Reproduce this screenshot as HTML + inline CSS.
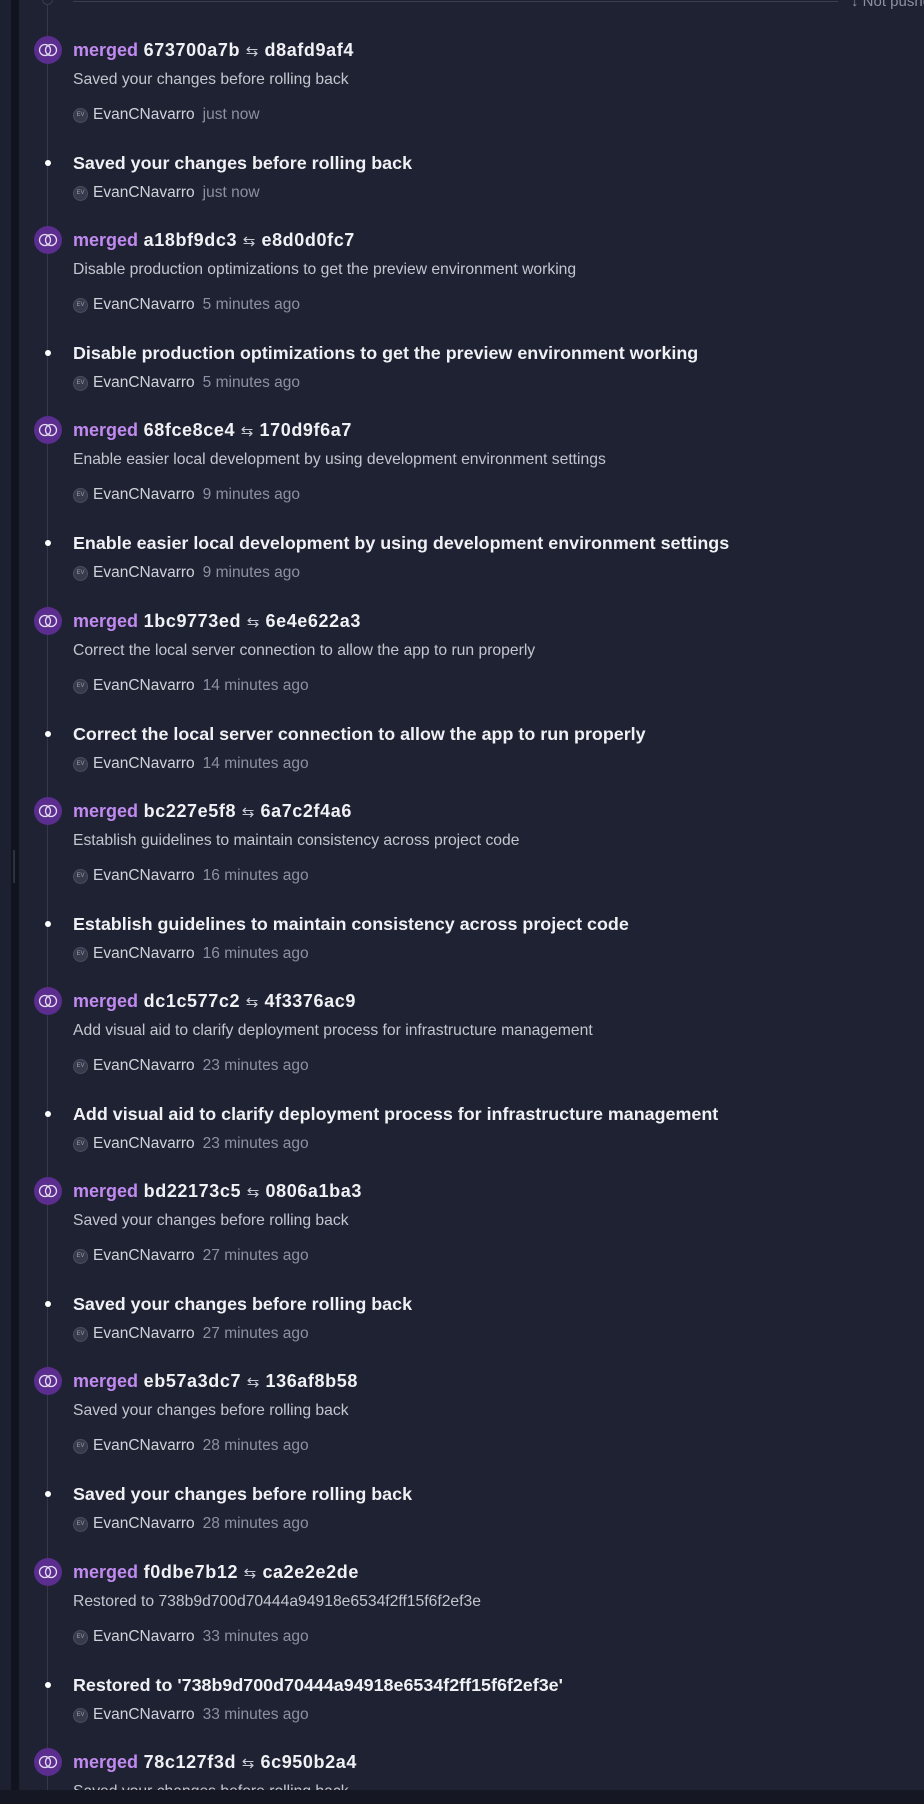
<!DOCTYPE html>
<html style="width:924px;height:1804px;overflow:hidden"><head><meta charset="utf-8"><style>
*{margin:0;padding:0;box-sizing:border-box}
body{width:924px;height:1804px;background:#1e2130;overflow:hidden;position:relative;font-family:"Liberation Sans",sans-serif}
.l1{position:absolute;left:0;top:0;width:11px;height:1804px;background:#1d2030}
.l2{position:absolute;left:11px;top:0;width:8px;height:1804px;background:#11141f}
.panel{position:absolute;left:19px;top:0;width:905px;height:1790px;background:#1f2232;border-bottom-left-radius:10px;overflow:hidden}
.bot{position:absolute;left:0;top:1790px;width:924px;height:14px;background:#151823}
.handle{position:absolute;left:13px;top:850px;width:2px;height:33px;background:#2c3040}
.vline{position:absolute;left:28px;top:0;width:1px;height:1790px;background:#343848}
.t{position:absolute;left:54px;white-space:nowrap;line-height:20px}
.h{font-size:17.9px;font-weight:bold;color:#f0f1f5}
.hm{font-size:18px;font-weight:bold;color:#f0f1f5;letter-spacing:0.6px}
.m{color:#c08af0;letter-spacing:0}
.sub{font-size:15.7px;color:#c3c5cf}
.au{font-size:15.5px;color:#d0d2da}
.au span{color:#8c90a0;margin-left:8px}
.av{position:absolute;left:54px;width:15px;height:15px;border-radius:50%;background:#363a4a;border:1px solid #4a4e5e;color:#9a9eae;font-size:6px;line-height:13px;text-align:center}
.circ{position:absolute;left:15px;width:28px;height:28px;border-radius:50%;background:#5a2d8e}
.dot{position:absolute;left:26px;width:6px;height:6px;border-radius:50%;background:#fff}
.ar{font-weight:normal;color:#c8cad4;font-size:15px}
</style></head><body>
<div class="l1"></div><div class="l2"></div><div class="bot"></div><div class="handle"></div>
<div class="panel">
<div class="vline"></div>
<div style="position:absolute;left:23px;top:-6px;width:11px;height:11px;border-radius:50%;border:1px solid #3a3e4e;background:#1f2232"></div>
<div style="position:absolute;left:54px;top:1px;width:765px;height:1px;background:#3a3e4e"></div>
<div class="t" style="left:832px;top:-8px;font-size:15px;color:#8c90a0">↓ Not pushed</div>
<div id="c"></div>
</div>
<script>
var d=[["673700a7b","d8afd9af4","Saved your changes before rolling back","Saved your changes before rolling back","just now"],
["a18bf9dc3","e8d0d0fc7","Disable production optimizations to get the preview environment working","Disable production optimizations to get the preview environment working","5 minutes ago"],
["68fce8ce4","170d9f6a7","Enable easier local development by using development environment settings","Enable easier local development by using development environment settings","9 minutes ago"],
["1bc9773ed","6e4e622a3","Correct the local server connection to allow the app to run properly","Correct the local server connection to allow the app to run properly","14 minutes ago"],
["bc227e5f8","6a7c2f4a6","Establish guidelines to maintain consistency across project code","Establish guidelines to maintain consistency across project code","16 minutes ago"],
["dc1c577c2","4f3376ac9","Add visual aid to clarify deployment process for infrastructure management","Add visual aid to clarify deployment process for infrastructure management","23 minutes ago"],
["bd22173c5","0806a1ba3","Saved your changes before rolling back","Saved your changes before rolling back","27 minutes ago"],
["eb57a3dc7","136af8b58","Saved your changes before rolling back","Saved your changes before rolling back","28 minutes ago"],
["f0dbe7b12","ca2e2e2de","Restored to 738b9d700d70444a94918e6534f2ff15f6f2ef3e","Restored to '738b9d700d70444a94918e6534f2ff15f6f2ef3e'","33 minutes ago"],
["78c127f3d","6c950b2a4","Saved your changes before rolling back","Saved your changes before rolling back","35 minutes ago"]];
var h="";
function ring(y){return '<div class="circ" style="top:'+(y-14)+'px"><svg width="28" height="28" viewBox="0 0 28 28"><circle cx="11" cy="14" r="5.5" fill="none" stroke="#e4dcf0" stroke-width="1.3"/><circle cx="17" cy="14" r="5.5" fill="none" stroke="#e4dcf0" stroke-width="1.3"/></svg></div>';}
function au(y,t){return '<div class="av" style="top:'+(y-7)+'px">EV</div><div class="t au" style="left:74px;top:'+(y-10)+'px">EvanCNavarro<span>'+t+'</span></div>';}
d.forEach(function(e,i){var y=Math.round(50+190.2*i);
h+=ring(y);
h+='<div class="t hm" style="top:'+(y-10)+'px"><span class="m">merged</span> '+e[0]+' <span class="ar">⇆</span> '+e[1]+'</div>';
h+='<div class="t sub" style="top:'+(y+20)+'px">'+e[2]+'</div>';
h+=au(y+65,e[4]);
h+='<div class="dot" style="top:'+(y+110)+'px"></div>';
h+='<div class="t h" style="top:'+(y+103)+'px">'+e[3]+'</div>';
h+=au(y+143,e[4]);});
document.getElementById("c").innerHTML=h;
</script>
</body></html>
